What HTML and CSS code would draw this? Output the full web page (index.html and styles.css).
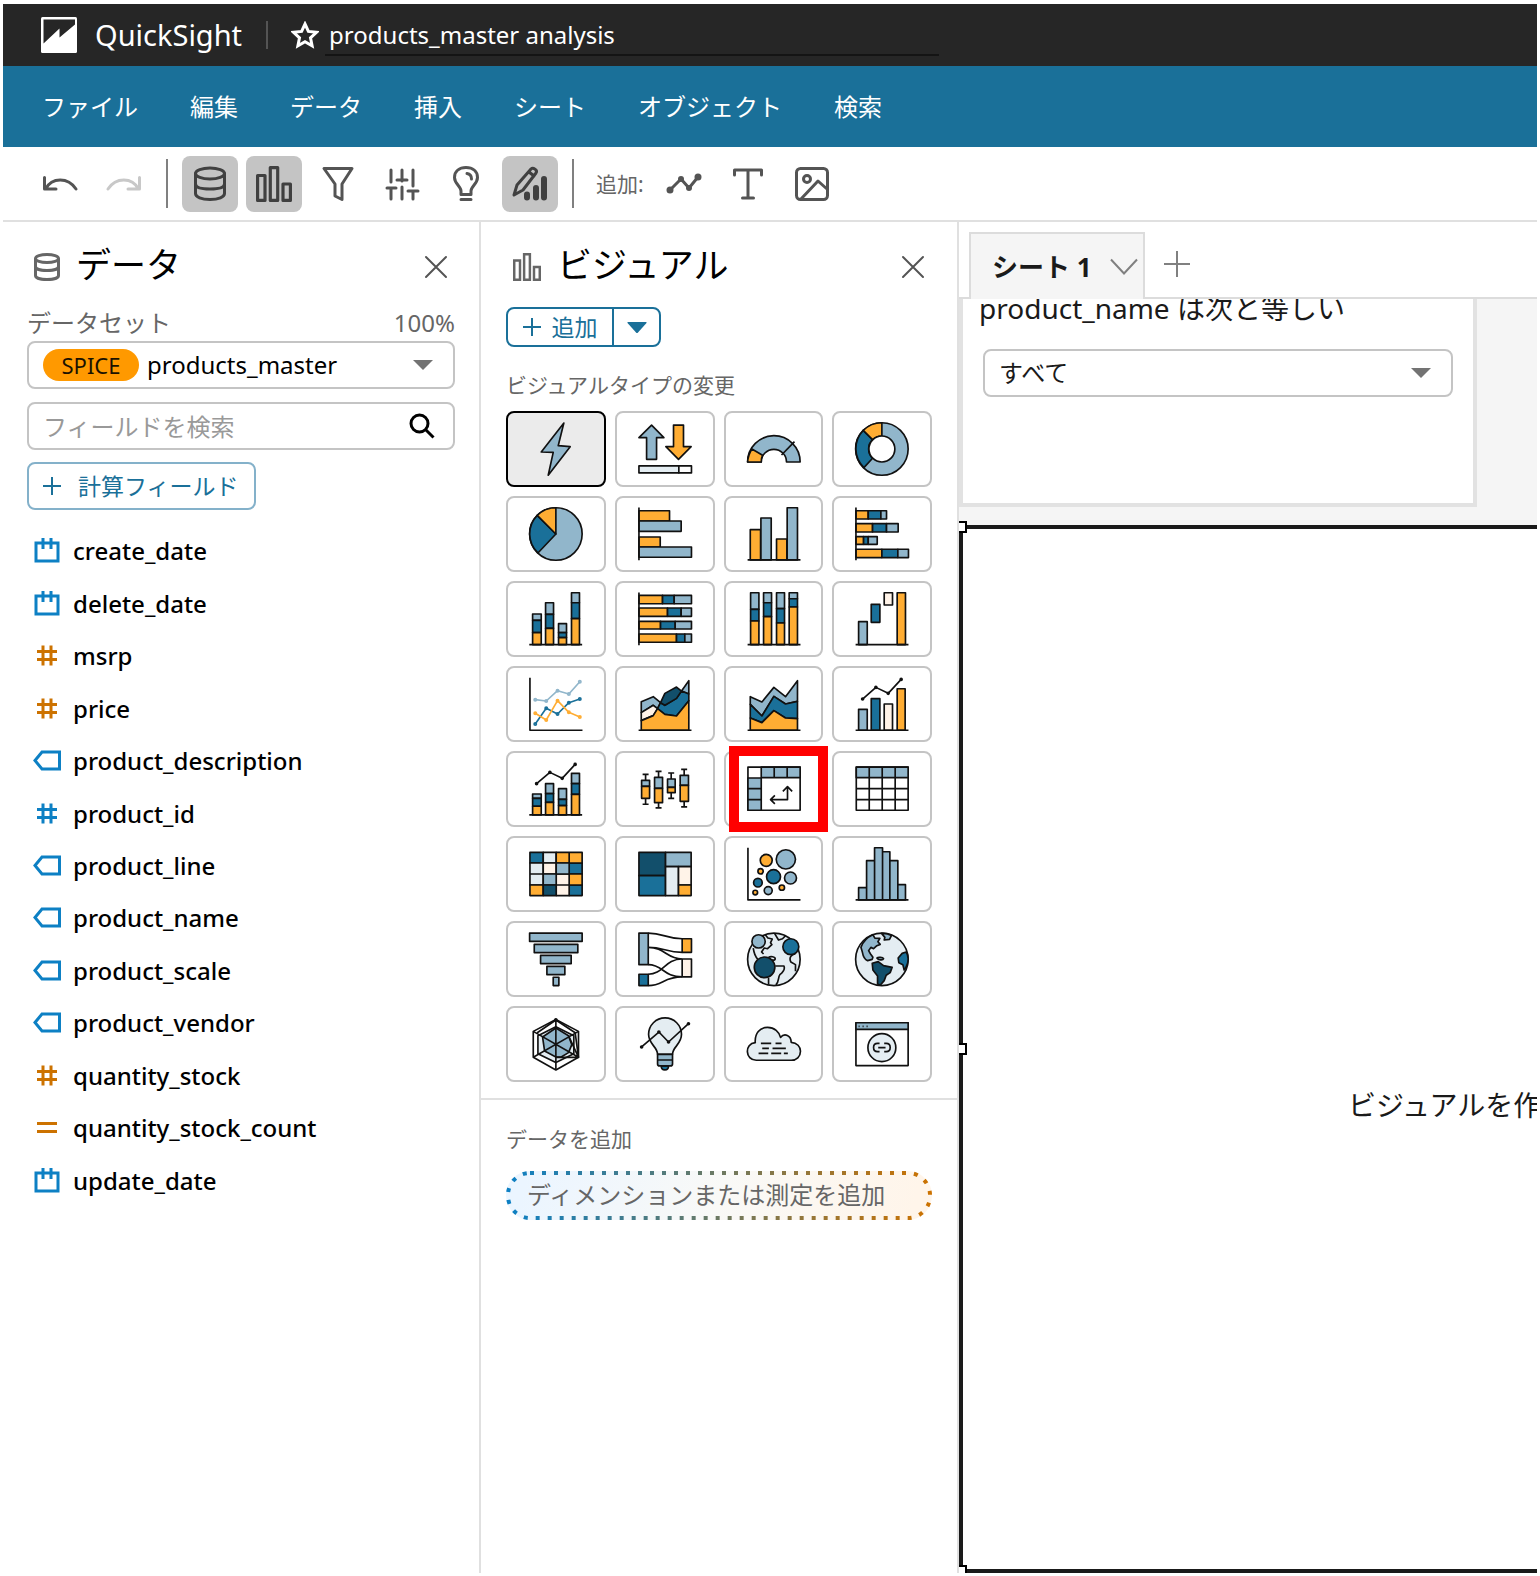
FILE: index.html
```html
<!DOCTYPE html>
<html lang="ja">
<head>
<meta charset="utf-8">
<meta name="viewport" content="width=device-width, initial-scale=1">
<title>products_master analysis</title>
<link rel="stylesheet" href="styles.css">
</head>
<body>
<svg class="defs" width="0" height="0" aria-hidden="true">
  <defs>
    <linearGradient id="drop-stroke"><stop offset="0" stop-color="#0d80c4"/><stop offset="1" stop-color="#cc7200"/></linearGradient>
  </defs>
  <symbol id="i-db" viewBox="0 0 26 28"><ellipse cx="13" cy="5.500" rx="11.500" ry="4"/><path d="M1.500 5.500v17c0 2.500 5 4 11.500 4s11.500-1.500 11.500-4v-17M1.500 13.500c0 2.500 5 4 11.500 4s11.500-1.500 11.500-4"/></symbol>
  <symbol id="i-bars" viewBox="0 0 34 34"><path d="M1.500 9h7v23.500h-7zM13.500 1.500h7v31h-7zM25.500 17h7v15.500h-7z"/></symbol>
  <symbol id="i-close" viewBox="0 0 24 24"><path d="M2 2l20 20M22 2L2 22"/></symbol>
  <symbol id="i-date" viewBox="0 0 28 28"><path d="M3 6h22v18H3zM10 1v11M18 1v11"/></symbol>
  <symbol id="i-num" viewBox="0 0 28 28"><path d="M10 3.500v20M18 3.500v20M4 9.500h20M4 17.500h20"/></symbol>
  <symbol id="i-str" viewBox="0 0 28 28"><path d="M2 13.500L9 5h17.500v17H9z"/></symbol>
  <symbol id="i-eq" viewBox="0 0 28 28"><path d="M4 9.500h20M4 17.500h20"/></symbol>
</svg>

<div class="app">
  <header class="topbar">
    <svg class="logo" viewBox="0 0 36 36" aria-hidden="true"><rect width="36" height="36" rx="1.500" fill="#fff"/><path d="M2.500 2.500H34v5L18.500 20.500v-9L2.500 26.500z" fill="#262626"/></svg>
    <span class="brand">QuickSight</span>
    <span class="topbar-sep"></span>
    <svg class="star" viewBox="0 0 28 28" aria-hidden="true"><path d="M14 3l3.400 7.400 8.100.9-6 5.500 1.600 8L14 20.800l-7.100 4 1.600-8-6-5.500 8.100-.9z"/></svg>
    <input class="doc-title" type="text" aria-label="分析名" value="products_master analysis">
  </header>

  <nav class="menubar">
    <a href="#">ファイル</a><a href="#">編集</a><a href="#">データ</a><a href="#">挿入</a><a href="#">シート</a><a href="#">オブジェクト</a><a href="#">検索</a>
  </nav>

  <div class="toolbar">
    <button class="tool" aria-label="元に戻す"><svg width="40" height="40" viewBox="0 0 40 40"><path d="M4.500 13.500V25H16M5.500 25C12 13 28 13 36 25"/></svg></button>
    <button class="tool tool-off" aria-label="やり直す" disabled><svg width="40" height="40" viewBox="0 0 40 40"><path d="M35.500 13.500V25H24M34.500 25C28 13 12 13 4 25"/></svg></button>
    <span class="tool-sep"></span>
    <button class="tool tool-on" aria-label="データ"><svg width="34" height="36" viewBox="0 0 34 36"><ellipse cx="17" cy="7.500" rx="14.500" ry="5.500"/><path d="M2.500 7.500v20c0 3.500 6 6 14.500 6s14.500-2.500 14.500-6v-20M2.500 18c0 3.500 6 5 14.500 5s14.500-1.500 14.500-5"/></svg></button>
    <button class="tool tool-on" aria-label="ビジュアル"><svg width="36" height="36"><use href="#i-bars"/></svg></button>
    <button class="tool" aria-label="フィルター"><svg width="34" height="36" viewBox="0 0 34 36"><path d="M3 2.500h28L21 18v15.500l-7-3.500V18z"/></svg></button>
    <button class="tool" aria-label="パラメータ"><svg width="36" height="36" viewBox="0 0 36 36"><path d="M7 4v12M3 22h9M7 22v11M18 4v11M13 14h10M18 21v12M29 4v16M24 25h10M29 25v8"/></svg></button>
    <button class="tool" aria-label="インサイト"><svg width="28" height="38" viewBox="0 0 28 38"><path d="M9 29.500V26C9 21 2.500 19 2.500 12.500 2.500 6 7.500 2.500 14 2.500S25.500 6 25.500 12.500C25.500 19 19 21 19 26v3.500zM9 34.500h10M15 8.500c3 .5 4.500 2.500 4.500 5.500"/></svg></button>
    <button class="tool tool-on" aria-label="編集"><svg width="38" height="38" viewBox="0 0 38 38"><path d="M3 30l3-10L20 4c2-2 7 1 5 4L12 25zM18 7l5 4"/><path d="M16 29.500v3M25 23v9.500M33 14v18.500" stroke-width="6"/></svg></button>
    <span class="tool-sep"></span>
    <span class="tool-label">追加:</span>
    <button class="tool" aria-label="線を追加"><svg width="36" height="36" viewBox="0 0 36 36"><path d="M4 24L15 13l8 9L32 11"/><g fill="#545454" stroke="none"><circle cx="4" cy="24" r="3.500"/><circle cx="15" cy="13" r="3"/><circle cx="23" cy="22" r="3"/><circle cx="32" cy="11" r="3.500"/></g></svg></button>
    <button class="tool" aria-label="テキストを追加"><svg width="36" height="36" viewBox="0 0 36 36"><path d="M4.500 9V4h27v5M18 4v28M12.500 32h11"/></svg></button>
    <button class="tool" aria-label="画像を追加"><svg width="36" height="36" viewBox="0 0 36 36"><rect x="2.500" y="2.500" width="31" height="31" rx="4"/><circle cx="13" cy="13" r="3.500"/><path d="M7 33L24 15l9 8"/></svg></button>
  </div>

  <main class="workspace">
    <section class="panel">
      <div class="panel-head">
        <svg class="head-icon" width="26" height="28"><use href="#i-db"/></svg>
        <h2>データ</h2>
        <button class="close" aria-label="閉じる"><svg width="24" height="24"><use href="#i-close"/></svg></button>
      </div>
      <div class="dataset-row"><label for="dataset">データセット</label><span>100%</span></div>
      <div class="field">
        <span class="spice">SPICE</span>
        <select id="dataset"><option>products_master</option></select>
        <svg class="caret" width="20" height="10" viewBox="0 0 20 10"><path d="M0 0h20L10 10z"/></svg>
      </div>
      <div class="field field-search">
        <input type="search" aria-label="フィールドを検索" placeholder="フィールドを検索">
        <svg class="lens" width="26" height="26" viewBox="0 0 26 26"><circle cx="10.500" cy="10.500" r="8.500"/><path d="M16.500 16.500l8 8"/></svg>
      </div>
      <button class="calc"><svg width="18" height="18" viewBox="0 0 18 18"><path d="M9 0v18M0 9h18"/></svg>計算フィールド</button>
      <ul class="fields">
        <li><svg class="dim"><use href="#i-date"/></svg>create_date</li>
        <li><svg class="dim"><use href="#i-date"/></svg>delete_date</li>
        <li><svg class="mea"><use href="#i-num"/></svg>msrp</li>
        <li><svg class="mea"><use href="#i-num"/></svg>price</li>
        <li><svg class="dim"><use href="#i-str"/></svg>product_description</li>
        <li><svg class="dim"><use href="#i-num"/></svg>product_id</li>
        <li><svg class="dim"><use href="#i-str"/></svg>product_line</li>
        <li><svg class="dim"><use href="#i-str"/></svg>product_name</li>
        <li><svg class="dim"><use href="#i-str"/></svg>product_scale</li>
        <li><svg class="dim"><use href="#i-str"/></svg>product_vendor</li>
        <li><svg class="mea"><use href="#i-num"/></svg>quantity_stock</li>
        <li><svg class="mea"><use href="#i-eq"/></svg>quantity_stock_count</li>
        <li><svg class="dim"><use href="#i-date"/></svg>update_date</li>
      </ul>
    </section>

    <section class="panel panel-visual">
      <div class="panel-head">
        <svg class="head-icon" width="28" height="28"><use href="#i-bars"/></svg>
        <h2>ビジュアル</h2>
        <button class="close" aria-label="閉じる"><svg width="24" height="24"><use href="#i-close"/></svg></button>
      </div>
      <div class="split">
        <button class="split-main"><svg width="18" height="18" viewBox="0 0 18 18"><path d="M9 0v18M0 9h18"/></svg>追加</button>
        <button class="split-more" aria-label="追加オプション"><svg width="20" height="11" viewBox="0 0 20 11"><path d="M1 0h18q1 0 .5 1L11 10.500q-1 1-2 0L.5 1Q0 0 1 0z"/></svg></button>
      </div>
      <p class="caption caption-types">ビジュアルタイプの変更</p>
      <div class="types">
        <button class="type type-on" aria-label="AutoGraph"><svg viewBox="24 26 288 216"><path class="lb" d="M192 56L124 143l36 1-15 69 66-86-36-3z"/></svg></button>
        <button class="type" aria-label="KPI"><svg viewBox="351 26 288 216"><path class="lb" d="M455 62l37 38h-22v65h-30v-65h-23z"/><path class="or" d="M521 62h30v65h23l-38 38-38-38h23z"/><path class="pl" d="M417 185h120v21H417z"/><path class="wh" d="M537 185h38v21h-38z"/></svg></button>
        <button class="type" aria-label="ゲージ"><svg viewBox="678 26 288 216"><path class="lb" d="M743 173a79 79 0 0 1 158 0h-41a38 38 0 0 0-76 0z"/><path class="or" d="M743 173a79 79 0 0 1 13-39l32 19a38 38 0 0 0-4 20z"/><path d="M884 112l-39 40"/></svg></button>
        <button class="type" aria-label="ドーナツ"><svg viewBox="1005 26 288 216"><circle class="lb" cx="1149" cy="134" r="79"/><path class="db" d="M1093 78a79 79 0 0 0 2 112l26-28a39 39 0 0 1 0-56z"/><path class="or" d="M1149 55a79 79 0 0 0-56 23l28 28a39 39 0 0 1 28-11z"/><circle class="wh" cx="1149" cy="134" r="39"/></svg></button>

        <button class="type" aria-label="円"><svg viewBox="24 281 288 216"><circle class="lb" cx="168" cy="389" r="79"/><path class="db" d="M112 333a79 79 0 0 0 2 113l54-57z"/><path class="or" d="M168 310a79 79 0 0 0-56 23l56 56z"/></svg></button>
        <button class="type" aria-label="横棒"><svg viewBox="351 281 288 216"><path class="or" d="M417 319h92v31h-92zM417 398h64v30h-64z"/><path class="lb" d="M417 350h127v31H417zM417 428h158v31H417z"/><path d="M417 309v159"/></svg></button>
        <button class="type" aria-label="縦棒"><svg viewBox="678 281 288 216"><path class="or" d="M751 376h31v91h-31zM830 404h31v63h-31z"/><path class="lb" d="M783 341h31v126h-31zM862 310h31v157h-31z"/><path d="M743 467h159"/></svg></button>
        <button class="type" aria-label="積み上げ横棒"><svg viewBox="1005 281 288 216"><path class="or" d="M1071 319h37v25h-37zM1071 358h50v25h-50zM1071 397h23v23h-23zM1071 435h78v25h-78z"/><path class="db" d="M1108 319h38v25h-38zM1121 358h42v25h-42zM1094 397h14v23h-14zM1149 435h48v25h-48z"/><path class="lb" d="M1146 319h17v25h-17zM1163 358h35v25h-35zM1108 397h27v23h-27zM1197 435h32v25h-32z"/><path d="M1071 309v159"/></svg></button>

        <button class="type" aria-label="積み上げ縦棒"><svg viewBox="24 536 288 216"><path class="lb" d="M98 629h26v19H98zM137 595h24v35h-24zM176 658h24v27h-24zM215 565h24v30h-24z"/><path class="db" d="M98 648h26v37H98zM137 630h24v42h-24zM176 685h24v15h-24zM215 595h24v48h-24z"/><path class="or" d="M98 685h26v36H98zM137 672h24v49h-24zM176 700h24v21h-24zM215 643h24v78h-24z"/><path d="M88 721h159"/></svg></button>
        <button class="type" aria-label="100% 横棒"><svg viewBox="351 536 288 216"><path class="or" d="M417 573h71v25h-71zM417 611h86v25h-86zM417 651h65v23h-65zM417 689h113v25H417z"/><path class="db" d="M488 573h35v25h-35zM503 611h41v25h-41zM482 651h44v23h-44zM530 689h25v25h-25z"/><path class="lb" d="M523 573h52v25h-52zM544 611h31v25h-31zM526 651h49v23h-49zM555 689h20v25h-20z"/><path d="M417 564v159"/></svg></button>
        <button class="type" aria-label="100% 縦棒"><svg viewBox="678 536 288 216"><path class="lb" d="M752 565h25v50h-25zM791 565h24v30h-24zM830 565h24v48h-24zM868 565h25v18h-25z"/><path class="db" d="M752 615h25v35h-25zM791 595h24v42h-24zM830 613h24v43h-24zM868 583h25v25h-25z"/><path class="or" d="M752 650h25v71h-25zM791 637h24v84h-24zM830 656h24v65h-24zM868 608h25v113h-25z"/><path d="M743 721h159"/></svg></button>
        <button class="type" aria-label="ウォーターフォール"><svg viewBox="1005 536 288 216"><path class="lb" d="M1079 652h26v69h-26z"/><path class="db" d="M1117 600h26v54h-26z"/><path class="cr" d="M1156 565h25v37h-25z"/><path class="or" d="M1195 565h25v156h-25z"/><path d="M1070 721h159"/></svg></button>

        <button class="type" aria-label="折れ線"><svg viewBox="24 24 288 216"><path d="M90 53v158h158"/><g class="line-lb"><path d="M106 119l33 4 34-31 34 10 33-37"/><circle cx="106" cy="119" r="3.500"/><circle cx="139" cy="123" r="3.500"/><circle cx="173" cy="92" r="3.500"/><circle cx="207" cy="102" r="3.500"/><circle cx="240" cy="65" r="3.500"/></g><g class="line-db"><path d="M106 192l33-47 34 17 34-34 33-11"/><circle cx="106" cy="192" r="3.500"/><circle cx="139" cy="145" r="3.500"/><circle cx="173" cy="162" r="3.500"/><circle cx="207" cy="128" r="3.500"/><circle cx="240" cy="117" r="3.500"/></g><g class="line-or"><path d="M106 160l33 20 34-58 34 35 33 14"/><circle cx="106" cy="160" r="3.500"/><circle cx="139" cy="180" r="3.500"/><circle cx="173" cy="122" r="3.500"/><circle cx="207" cy="157" r="3.500"/><circle cx="240" cy="171" r="3.500"/></g></svg></button>
        <button class="type" aria-label="面"><svg viewBox="351 24 288 216"><path class="lb" d="M424 125l36-15 22 18-9 18-13-10-36 22zM545 93l22-31v40z"/><path class="cr" d="M424 158l36-22 13 10-13 21-36 15z"/><path class="db" d="M473 146l9-18 13 8 35-21 15-22 22 9v20l-37 46-35-5z"/><path class="nv" d="M495 136l-13-8 13-28 35-19 15 12-15 22z"/><path class="or" d="M424 182l36-15 13-21 22 17 35 5 37-46v89H424z"/><path d="M416 211h159"/></svg></button>
        <button class="type" aria-label="積み上げ面"><svg viewBox="678 24 288 216"><path class="lb" d="M751 110l35 16 36-44 35 28 36-48v62l-36 8-35-23-36 59-35-35z"/><path class="db" d="M751 133l35 35 36-59 35 23 36-8v52l-36-2-35-22-36 36-35-14z"/><path class="or" d="M751 174l35 14 36-36 35 22 36 2v35H751z"/><path d="M743 211h159"/></svg></button>
        <button class="type" aria-label="コンボ"><svg viewBox="1005 24 288 216"><path class="lb" d="M1079 148h26v63h-26z"/><path class="db" d="M1117 116h26v95h-26z"/><path class="cr" d="M1156 132h25v79h-25z"/><path class="or" d="M1195 86h24v125h-24z"/><path d="M1070 211h159M1091 117l40-35 37 18 39-42"/><g class="dots"><circle cx="1091" cy="117" r="3"/><circle cx="1131" cy="82" r="3"/><circle cx="1168" cy="100" r="3"/><circle cx="1207" cy="58" r="3"/></g></svg></button>

        <button class="type" aria-label="積み上げコンボ"><svg viewBox="24 279 288 216"><path class="lb" d="M98 402h26v13H98zM137 371h24v30h-24zM176 386h24v32h-24zM215 340h24v31h-24z"/><path class="db" d="M98 415h26v24H98zM137 401h24v26h-24zM176 418h24v19h-24zM215 371h24v32h-24z"/><path class="or" d="M98 439h26v26H98zM137 427h24v38h-24zM176 437h24v28h-24zM215 403h24v62h-24z"/><path d="M88 465h159M110 371l40-34 37 18 39-42"/><g class="dots"><circle cx="110" cy="371" r="3"/><circle cx="150" cy="337" r="3"/><circle cx="187" cy="355" r="3"/><circle cx="226" cy="313" r="3"/></g></svg></button>
        <button class="type" aria-label="箱ひげ"><svg viewBox="351 279 288 216"><path d="M437 343v90M428 343h18M428 433h18M476 334v110M467 334h18M467 444h18M514 339v76M505 339h18M505 415h18M553 328v113M544 328h18M544 441h18"/><path class="lb" d="M425 361h24v18h-24zM464 352h24v33h-24zM503 357h23v25h-23zM541 346h25v30h-25z"/><path class="or" d="M425 379h24v36h-24zM464 385h24v43h-24zM503 382h23v16h-23zM541 376h25v48h-25z"/></svg></button>
        <button class="type" aria-label="ピボットテーブル"><svg viewBox="678 279 288 216"><path class="wh" d="M744 321h157v130H744z"/><path class="lb" d="M784 321h39v32h-39zM823 321h39v32h-39zM862 321h39v32h-39zM744 354h40v32h-40zM744 386h40v33h-40zM744 419h40v32h-40z"/><path d="M812 419h51v-39M825 406l-13 13 13 13M849 394l14-14 14 14"/></svg><span class="highlight"></span></button>
        <button class="type" aria-label="テーブル"><svg viewBox="1005 279 288 216"><path class="wh" d="M1072 321h156v130h-156z"/><path class="lb" d="M1072 321h156v32h-156z"/><path d="M1111 321v130M1150 321v130M1189 321v130M1072 386h156M1072 419h156"/></svg></button>

        <button class="type" aria-label="ヒートマップ"><svg viewBox="24 533 288 216"><path class="db" d="M90 576h40v32H90zM208 608h39v33h-39zM208 674h39v32h-39z"/><path class="pl" d="M130 576h39v32h-39zM90 608h40v33H90zM90 641h40v33H90z"/><path class="or" d="M169 576h39v32h-39zM208 576h39v32h-39zM208 641h39v33h-39zM90 674h40v32H90z"/><path class="cr" d="M130 608h39v33h-39zM169 641h39v33h-39zM169 674h39v32h-39z"/><path class="lb" d="M169 608h39v33h-39zM130 641h39v33h-39z"/><path class="nv" d="M130 674h39v32h-39z"/></svg></button>
        <button class="type" aria-label="ツリーマップ"><svg viewBox="351 533 288 216"><path class="nv" d="M417 576h80v70h-80z"/><path class="db" d="M417 646h80v60h-80z"/><path class="lb" d="M497 576h77v43h-77z"/><path class="pl" d="M497 619h39v87h-39z"/><path class="cr" d="M536 619h38v55h-38z"/><path class="or" d="M536 674h38v32h-38z"/></svg></button>
        <button class="type" aria-label="散布図"><svg viewBox="678 533 288 216"><path d="M744 562v157h158"/><circle class="or" cx="799" cy="600" r="18"/><circle class="lb" cx="858" cy="597" r="29"/><circle class="or" cx="782" cy="633" r="8"/><circle class="db" cx="821" cy="649" r="21"/><circle class="lb" cx="872" cy="653" r="18"/><circle class="db" cx="774" cy="667" r="13"/><circle class="lb" cx="805" cy="691" r="12"/><circle class="or" cx="846" cy="682" r="8"/><circle class="or" cx="766" cy="697" r="7"/></svg></button>
        <button class="type" aria-label="ヒストグラム"><svg viewBox="1005 533 288 216"><path class="lb" d="M1079 682h24v37h-24zM1103 601h24v118h-24zM1127 562h24v157h-24zM1151 574h22v145h-22zM1173 601h24v118h-24zM1197 673h23v46h-23z"/><path d="M1070 719h159"/></svg></button>

        <button class="type" aria-label="ファンネル"><svg viewBox="24 21 288 216"><path class="lb" d="M89 51h158v25H89zM103 85h131v25H103zM122 118h92v25h-92zM141 151h54v25h-54zM160 184h17v25h-17z"/></svg></button>
        <button class="type" aria-label="サンキー"><svg viewBox="351 21 288 216"><path d="M445 51c45 0 55 17 102 17M445 94c45 0 55 15 102 15M445 94c50 0 55 35 102 35M445 146c45 0 45 37 102 37M445 175c45 0 50-46 102-46M445 209c45 0 45-26 102-26"/><path class="lb" d="M417 51h28v95h-28z"/><path class="db" d="M417 175h28v34h-28z"/><path class="or" d="M547 68h28v41h-28z"/><path class="cr" d="M547 129h28v54h-28z"/></svg></button>
        <button class="type" aria-label="ポイントマップ"><svg viewBox="678 21 288 216"><circle class="pl" cx="822" cy="130" r="79"/><path d="M796 56l8 10 13 3-5 11 4 6-13 12-10-2-8 12 6 6M760 96c2 14 4 24 14 34M824 52l12 20 12-4 10-10M806 124c6-4 20-2 20 4s-12 6-18 0M826 150l26 0c4 8-2 18-12 26-6 8-2 22-12 31M806 186v20M887 112c-14 4-20 14-14 26l14 8v20"/><circle class="lb" cx="776" cy="76" r="20"/><circle class="db" cx="873" cy="92" r="24"/><circle class="nv" cx="794" cy="154" r="31"/></svg></button>
        <button class="type" aria-label="塗りつぶしマップ"><svg viewBox="1005 21 288 216"><circle class="pl" cx="1149" cy="130" r="79"/><path class="lb" d="M1122 56l6 10 15 1-6 10 7 8-10 4-10 9-8-4-7 10 6 10 7 10-2 6-14 4c-12-4-14-16-16-27l-4-13c6-17 18-30 36-38zM1148 52l10 12-2 8 16-2 6-12c-8-4-18-7-30-6z"/><path class="db" d="M1222 108l-12 4-12 14 2 14 12 6 4 16c6-8 12-20 12-34 0-8-2-14-6-20z"/><path class="nv" d="M1120 142l18-5 16 12 26 5-6 16-12 8-6 16-12 14-8-4v-24l-14-18z"/><path class="lb" d="M1134 126c4-4 18-2 20 2-2 6-16 4-20-2z"/></svg></button>

        <button class="type" aria-label="レーダー"><svg viewBox="24 276 288 216"><path class="wh" d="M168 310l68 36v78l-68 38-68-38v-78z"/><path class="pl" d="M168 332l54 27v54l-54 27-54-27v-54z"/><path class="lb" d="M168 336l38 23 10 27-10 24-22 13h-16l-34-18-6-42z"/><path d="M168 310v152M100 346l136 78M236 346l-136 78M168 312l-56 38M168 312l58 38 10 74h-68M206 359l30 65"/><g class="dots"><circle cx="168" cy="311" r="3"/></g></svg></button>
        <button class="type" aria-label="インサイト"><svg viewBox="351 276 288 216"><path class="db" d="M484 450h22q0 12-11 12t-11-12z"/><path class="pl" d="M473 415c-1-24-27-30-27-60a49 49 0 0 1 99 0c0 30-26 36-27 60z"/><path class="lb" d="M473 415h45v29q0 6-6 6h-33q-6 0-6-6zM473 432h45"/><path d="M425 393l52-45 29 30 60-55"/><g class="dots"><circle cx="425" cy="393" r="3"/><circle cx="477" cy="348" r="3"/><circle cx="506" cy="378" r="3"/><circle cx="566" cy="323" r="3"/></g></svg></button>
        <button class="type" aria-label="ワードクラウド"><svg viewBox="678 276 288 216"><path class="pl" d="M769 433c-34 0-36-50-3-53-2-28 14-46 37-46 21 0 35 14 39 30 12-14 32-6 32 15 18 1 28 13 28 27 0 16-12 27-28 27z"/><path d="M783 382h31M827 382h18M787 397h20M818 397h40M776 412h29M814 412h30M852 412h12"/></svg></button>
        <button class="type" aria-label="カスタムコンテンツ"><svg viewBox="1005 276 288 216"><path class="wh" d="M1071 320h157v129h-157z"/><path class="lb" d="M1071 320h157v20h-157z"/><path d="M1079 331h3M1091 331h3M1103 331h3"/><circle class="pl" cx="1149" cy="395" r="42"/><path d="M1142 382h-6c-16 0-16 25 0 25h6M1156 382h6c16 0 16 25 0 25h-6M1138 395h22"/></svg></button>
      </div>
      <div class="wells">
        <p class="caption">データを追加</p>
        <div class="drop">
          <svg aria-hidden="true"><rect class="drop-line" x="2" y="2" rx="22"/></svg>
          <span>ディメンションまたは測定を追加</span>
        </div>
      </div>
    </section>

    <section class="stage">
      <div class="tabs">
        <button class="tab">シート 1<svg width="28" height="18" viewBox="0 0 28 18"><path d="M1 1.500l13 14 13-14"/></svg></button>
        <button class="tab-add" aria-label="シートを追加"><svg width="28" height="28" viewBox="0 0 28 28"><path d="M14 1v26M1 14h26"/></svg></button>
      </div>
      <div class="sheet">
        <div class="control">
          <label for="pname">product_name は次と等しい</label>
          <div class="field">
            <select id="pname"><option>すべて</option></select>
            <svg class="caret" width="20" height="10" viewBox="0 0 20 10"><path d="M0 0h20L10 10z"/></svg>
          </div>
        </div>
        <div class="visual">
          <span class="grip grip-top"></span><span class="grip grip-mid"></span><span class="grip grip-bottom"></span>
          <p>ビジュアルを作</p>
        </div>
      </div>
    </section>
  </main>
</div>
</body>
</html>
```
FILE: styles.css
```css
* { box-sizing: border-box; }

body {
  margin: 0;
  background: #fff;
  color: #000;
  font-family: "Noto Sans", "Noto Sans CJK JP", sans-serif;
  font-size: 24px;
  line-height: 32px;
}

button, input, select { font: inherit; color: inherit; margin: 0; padding: 0; border: 0; background: none; border-radius: 0; }
h2, p, ul { margin: 0; padding: 0; }
svg { display: block; flex: none; fill: none; }
.defs { position: absolute; }

.app {
  display: flex;
  flex-direction: column;
  min-height: 100vh;
  padding: 4px 3px 3px;
}

/* top bar */
.topbar {
  display: flex;
  align-items: center;
  height: 62px;
  padding-left: 38px;
  background: #262626;
  color: #fff;
}
.logo { width: 36px; height: 36px; }
.brand { margin-left: 18px; font-size: 29px; }
.topbar-sep { width: 2px; height: 28px; margin: 0 23px 0 24px; background: #545454; }
.star { width: 28px; height: 28px; stroke: #fff; stroke-width: 3; }
.doc-title {
  flex: 0 1 614px;
  min-width: 0;
  height: 42px;
  margin-left: 6px;
  padding: 0 4px;
  border-bottom: 2px solid #141414;
}

/* menu */
.menubar {
  display: flex;
  align-items: center;
  gap: 52px;
  height: 81px;
  padding-left: 39px;
  background: #1a7099;
  color: #fff;
}
.menubar a { color: inherit; text-decoration: none; white-space: nowrap; }

/* toolbar */
.toolbar {
  display: flex;
  align-items: center;
  gap: 8px;
  height: 75px;
  padding-left: 29px;
  border-bottom: 2px solid #e0e0e0;
  color: #666;
  font-size: 21px;
}
.tool {
  display: flex;
  align-items: center;
  justify-content: center;
  width: 56px;
  height: 56px;
  border-radius: 8px;
}
.tool svg { stroke: #545454; stroke-width: 3; stroke-linecap: round; stroke-linejoin: round; }
.tool-on { background: #c4c4c4; }
.tool-on svg { stroke: #404040; }
.tool-off svg { stroke: #c8c8c8; }
.tool-sep { width: 2px; height: 49px; margin: 0 6px; background: #808080; }
.tool-label { margin: 0 4px 0 8px; }

/* panels */
.workspace { display: flex; flex: 1; }
.panel {
  flex: none;
  width: 478px;
  padding: 0 24px;
  border-right: 2px solid #e0e0e0;
}
.panel-visual { padding: 0 25px; }
.panel-head { display: flex; align-items: center; height: 85px; padding: 0 7px; }
.head-icon { margin-top: 4px; stroke: #666; stroke-width: 3; }
.panel h2 { margin-left: 16px; font-size: 35px; font-weight: 400; line-height: 48px; }
.close { margin: 4px 0 0 auto; }
.close svg { stroke: #545454; stroke-width: 2; stroke-linecap: round; }

.dataset-row { display: flex; justify-content: space-between; height: 34px; color: #666; }

.field {
  display: flex;
  align-items: center;
  height: 48px;
  padding: 0 20px 0 14px;
  border: 2px solid #c4c4c4;
  border-radius: 8px;
  background: #fff;
}
.field select, .field input { flex: 1; min-width: 0; height: 44px; outline: 0; appearance: none; }
.field input::placeholder { color: #999; opacity: 1; }
.field-search { margin-top: 13px; padding-right: 18px; }
.caret { fill: #737373; }
.lens { stroke: #000; stroke-width: 3; }
.spice {
  width: 96px;
  margin-right: 8px;
  border-radius: 16px;
  background: #f90;
  color: #1a1200;
  font-size: 22px;
  text-align: center;
}
.calc {
  display: flex;
  align-items: center;
  gap: 17px;
  height: 48px;
  margin-top: 12px;
  padding: 0 15px 0 14px;
  border: 2px solid #84b1ca;
  border-radius: 8px;
  color: #1a7099;
  font-size: 23px;
}
.calc svg, .split-main svg { stroke: #1a7099; stroke-width: 2; }

.fields {
  display: grid;
  grid-auto-rows: 1fr;
  height: 682px;
  margin-top: 15px;
  font-weight: 500;
  list-style: none;
}
.fields li { display: flex; align-items: center; gap: 12px; padding-left: 6px; }
.fields svg { width: 28px; height: 28px; stroke-width: 3; }
.dim { stroke: #0d80c4; }
.mea { stroke: #cc7200; }

/* visual panel */
.split {
  display: flex;
  width: 155px;
  height: 40px;
  border: 2px solid #1a7099;
  border-radius: 8px;
  color: #1a7099;
  font-size: 23px;
}
.split-main { display: flex; align-items: center; justify-content: center; gap: 11px; flex: 1; }
.split-more { display: flex; align-items: center; justify-content: center; width: 47px; border-left: 2px solid #1a7099; }
.split-more svg { fill: #1a7099; }
.caption { color: #666; font-size: 21px; }
.caption-types { margin: 22px 0 10px; }

.types { display: grid; grid-template-columns: repeat(4, 1fr); gap: 9px; }
.type { position: relative; height: 76px; border: 2px solid #c4c4c4; border-radius: 8px; background: #fff; }
.type-on { border-color: #000; background: #ebebeb; }
.type svg { width: 100%; height: 72px; stroke: #111; stroke-width: 5; stroke-linejoin: round; }
.lb { fill: #91b6cb; }
.db { fill: #1a7099; }
.nv { fill: #124f6b; }
.or { fill: #ffad33; }
.pl { fill: #e4edf2; }
.cr { fill: #fff3e8; }
.wh { fill: #fff; }
.dots { fill: #111; }
.line-lb { stroke: #91b6cb; }
.line-db { stroke: #1a7099; }
.line-or { stroke: #ffad33; }
.highlight { position: absolute; top: -7px; left: 3px; width: 99px; height: 86px; border: 10px solid #f00; }

.wells { margin: 16px -25px 0; padding: 23px 25px 0; border-top: 2px solid #e0e0e0; }
.drop {
  position: relative;
  height: 49px;
  margin-top: 16px;
  padding: 0 21px;
  border-radius: 25px;
  background: linear-gradient(105deg, #ebf5ff 5%, #f9f9f7 50%, #fff5ea 95%);
  color: #666;
  line-height: 48px;
  white-space: nowrap;
}
.drop svg { position: absolute; inset: 0; width: 100%; height: 100%; }
.drop-line { width: calc(100% - 4px); height: 45px; stroke: url(#drop-stroke); stroke-width: 4; stroke-dasharray: 4 8; }

/* sheet */
.stage { display: flex; flex: 1; flex-direction: column; min-width: 0; color: #1a1a1a; }
.tabs { display: flex; align-items: flex-end; height: 77px; padding-left: 10px; border-bottom: 2px solid #dcdcdc; }
.tab {
  display: flex;
  align-items: center;
  gap: 18px;
  height: 67px;
  margin-bottom: -2px;
  padding: 0 5px 0 21px;
  border: 2px solid #dcdcdc;
  border-bottom: 0;
  background: #f5f5f5;
  font-size: 26px;
  font-weight: 700;
}
.tab svg, .tab-add svg { stroke: #808080; stroke-width: 2; }
.tab-add { margin: 0 0 19px 18px; }
.sheet { display: flex; flex: 1; flex-direction: column; overflow: hidden; background: #f5f5f5; }
.control {
  width: 518px;
  height: 219px;
  margin-top: -11px;
  padding: 0 20px 0 16px;
  border: 4px solid #e2e2e2;
  border-top: 0;
  background: #fff;
}
.control label { display: block; font-size: 28px; line-height: 40px; }
.control .field { margin: 21px 0 0 4px; }
.visual {
  position: relative;
  flex: 1;
  margin-top: 18px;
  border: 4px solid #1a1a1a;
  border-right: 0;
  background: #fff;
}
.visual p { margin: 556px 0 0 385px; font-size: 28px; line-height: 40px; white-space: nowrap; }
.grip { position: absolute; left: -8px; width: 12px; height: 12px; border: 2px solid #000; background: #fff; }
.grip-top { top: -8px; }
.grip-mid { top: calc(50% - 6px); }
.grip-bottom { bottom: -8px; }
```
